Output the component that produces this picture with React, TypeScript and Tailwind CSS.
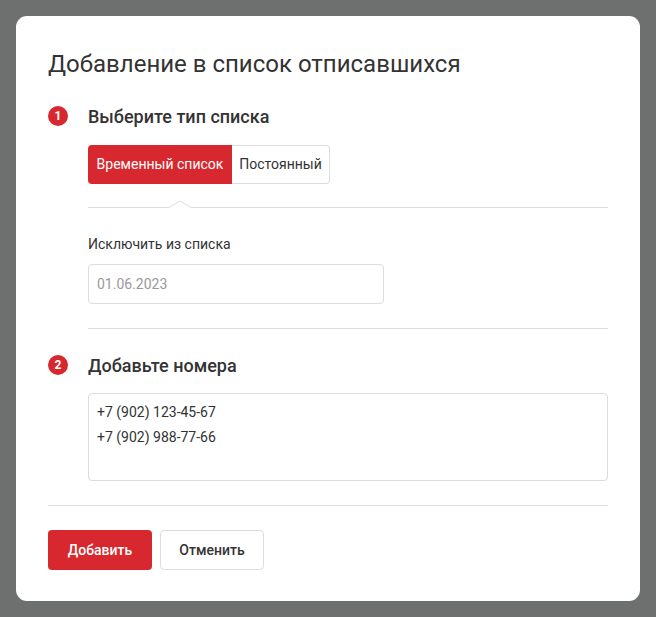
export default function App() {
  return (
    <div className="min-h-[617px] bg-[#6e6f6f] p-4 font-['Roboto',sans-serif] text-[#333]">
      <div className="w-[624px] h-[585px] bg-white rounded-[11px] px-8 pt-8">
        <h1 className="text-[24px] leading-[32px] font-normal text-[#333]">Добавление в список отписавшихся</h1>

        <StepHeader n={1} title="Выберите тип списка" className="mt-6" />

        <div className="pl-10">
          <div className="mt-[17px] flex h-[39px] w-fit text-[14px]">
            <button className="w-[144px] h-full bg-[#d7282f] text-white rounded-l-[4px]">Временный список</button>
            <button className="w-[98px] h-full border border-l-0 border-[#dcdcdc] rounded-r-[4px] text-[#333]">Постоянный</button>
          </div>

          <div className="relative mt-[23px] border-t border-[#dcdcdc]">
            <svg className="absolute left-[80px] top-[-8px]" width="24" height="9" viewBox="0 0 24 9">
              <path d="M0 8 L12 1 L24 8" fill="white" stroke="#dcdcdc" strokeWidth="1" />
            </svg>
          </div>

          <div className="mt-[26px] text-[14px] leading-[20px] text-[#333]">Исключить из списка</div>
          <input
            className="mt-[10px] block w-[296px] h-[40px] border border-[#dcdcdc] rounded-[4px] px-2 text-[14px] text-[#333] placeholder:text-[#9a9a9a] outline-none"
            placeholder="01.06.2023"
          />

          <div className="mt-6 border-t border-[#dcdcdc]" />
        </div>

        <StepHeader n={2} title="Добавьте номера" className="mt-6" />

        <div className="pl-10">
          <textarea
            className="mt-4 block w-[520px] h-[88px] resize-none border border-[#dcdcdc] rounded-[4px] px-2 pt-[6px] text-[14px] leading-[25px] text-[#333] outline-none"
            defaultValue={"+7 (902) 123-45-67\n+7 (902) 988-77-66"}
          />
        </div>

        <div className="mt-6 border-t border-[#dcdcdc]" />

        <div className="mt-6 flex gap-2">
          <button className="w-[104px] h-[40px] bg-[#d7282f] text-white text-[14px] font-medium rounded-[4px]">Добавить</button>
          <button className="w-[104px] h-[40px] border border-[#dcdcdc] text-[#333] text-[14px] font-medium rounded-[4px]">Отменить</button>
        </div>
      </div>
    </div>
  )
}

function StepHeader({ n, title, className }: { n: number; title: string; className?: string }) {
  return (
    <div className={`flex items-center h-6 gap-5 ${className ?? ''}`}>
      <span className="w-5 h-5 rounded-full bg-[#d7282f] text-white text-[12px] font-bold flex items-center justify-center">{n}</span>
      <span className="text-[18px] font-medium text-[#333]">{title}</span>
    </div>
  )
}
